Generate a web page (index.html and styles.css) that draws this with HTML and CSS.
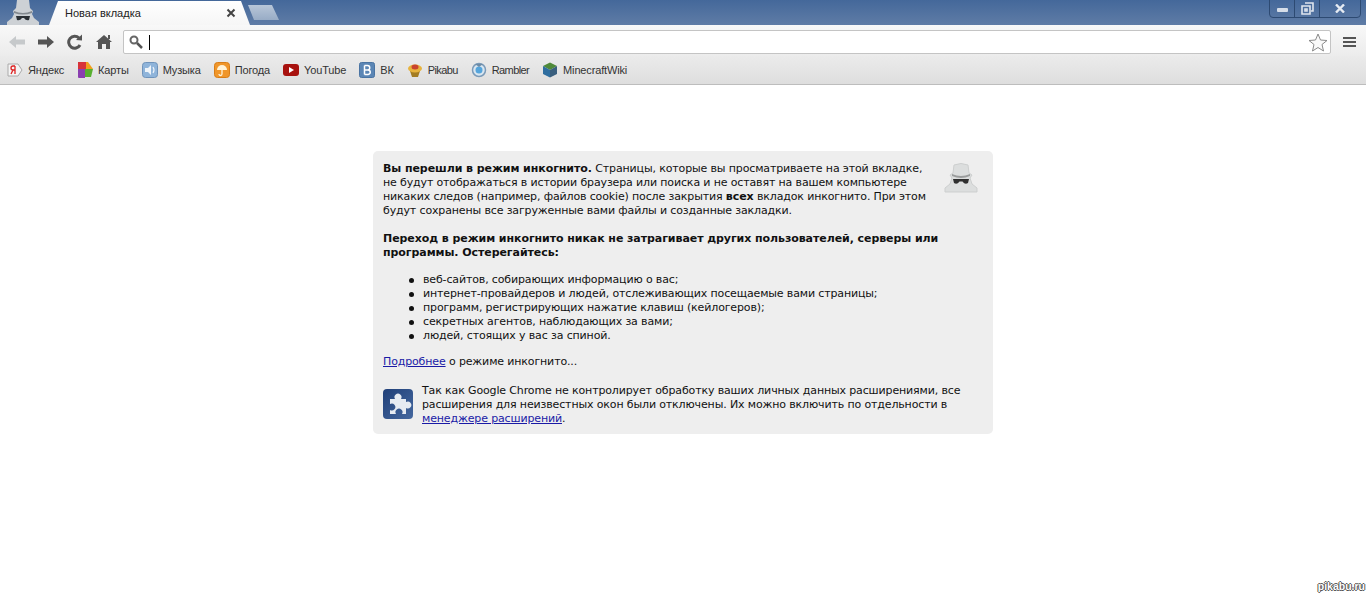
FILE: index.html
```html
<!DOCTYPE html>
<html lang="ru">
<head>
  <meta charset="UTF-8" />
  <title>Новая вкладка</title>
  <link rel="stylesheet" href="styles.css">
</head>
<body>
  <div class="browser">
    <div class="titlebar">
      <svg class="spy" width="36" height="25" viewBox="0 0 36 25">
        <path d="M12 0 L24 0 L25 8 L28 11 L27 14 L29 18 L34 22 L34 25 L2 25 L2 22 L7 18 L9 14 L8 11 L11 8 Z" fill="#cdd1d5"/>
        <path d="M9 11 Q18 15 27 11 L27 13 Q18 16 9 13 Z" fill="#83898f"/>
        <path d="M11 16 L25 16 L24 20 Q21 21 19 18 L17 18 Q15 21 12 20 Z" fill="#2b3035"/>
      </svg>
      <div class="tab">
        <span class="tab-title">Новая вкладка</span>
        <svg class="tab-close" width="10" height="10" viewBox="0 0 10 10"><path d="M1.500 1.500 L8.500 8.500 M8.500 1.500 L1.500 8.500" stroke="#444" stroke-width="2"/></svg>
      </div>
      <div class="newtab"></div>
      <div class="winctl">
        <div class="winbtn minbtn"><span class="min-glyph"></span></div>
        <div class="winbtn maxbtn">
          <svg width="13" height="13" viewBox="0 0 13 13"><path d="M4 1h8v8h-2M1 4h8v8H1zM4 7h2v2H4z" fill="none" stroke="#dfe5ee" stroke-width="1.600"/></svg>
        </div>
        <div class="winbtn closebtn">
          <svg width="10" height="9" viewBox="0 0 10 9"><path d="M1 0.500 L9 8.500 M9 0.500 L1 8.500" stroke="#e6ebf2" stroke-width="2.400"/></svg>
        </div>
      </div>
    </div>

    <div class="toolbar">
      <svg class="navicon" width="18" height="16" viewBox="0 0 18 16"><path d="M1 8 L8 2 V5.500 H17 V10.500 H8 V14 Z" fill="#c6c9cb"/></svg>
      <svg class="navicon" width="18" height="16" viewBox="0 0 18 16"><path d="M17 8 L10 2 V5.500 H1 V10.500 H10 V14 Z" fill="#555"/></svg>
      <svg class="navicon" width="18" height="16" viewBox="0 0 18 16"><path d="M14 11 A6 6 0 1 1 13 4" fill="none" stroke="#555" stroke-width="3"/><path d="M10 6 L16 6.500 L16 0.500 Z" fill="#555"/></svg>
      <svg class="navicon" width="18" height="16" viewBox="0 0 18 16"><path d="M9 1 L17 8 L15 8 V15 H11 V10 H7 V15 H3 V8 H1 Z" fill="#555"/><rect x="13" y="1" width="2" height="4" fill="#555"/></svg>
      <div class="omnibox">
        <svg width="14" height="14" viewBox="0 0 14 14"><circle cx="5" cy="5" r="3.500" fill="none" stroke="#666" stroke-width="2"/><path d="M8 8 L13 13" stroke="#555" stroke-width="2.500"/></svg>
        <span class="caret"></span>
        <svg class="star" width="20" height="19" viewBox="0 0 20 19"><path d="M10 1 L12.500 7 L19 7.500 L14 11.500 L15.500 18 L10 14.500 L4.500 18 L6 11.500 L1 7.500 L7.500 7 Z" fill="#fafafa" stroke="#8a8a8a"/></svg>
      </div>
      <div class="menu"><span></span><span></span><span></span></div>
    </div>

    <div class="bookmarks">
      <span class="bm">
        <svg width="16" height="16" viewBox="0 0 16 16"><path d="M1 2h10l4 6-4 6H1z" fill="#f4f4f4" stroke="#aaa"/><path d="M8 4v8M8 4H6a2 2 0 0 0 0 4h2M6 8l-2 4" fill="none" stroke="#d22" stroke-width="1.300"/></svg>
        Яндекс
      </span>
      <span class="bm">
        <svg width="16" height="16" viewBox="0 0 16 16"><path d="M1 0h8v7H1z" fill="#d8333a"/><path d="M1 7h7v9H2q-1 0-1-1z" fill="#8a3fb0"/><path d="M9 0h2l5 7H9z" fill="#f2a01e"/><path d="M8 7h8l-2 8H8z" fill="#58b030"/></svg>
        Карты
      </span>
      <span class="bm">
        <svg width="16" height="16" viewBox="0 0 16 16"><rect x="0.500" y="0.500" width="15" height="15" rx="3" fill="#8fb4da" stroke="#6f93bb"/><path d="M3 6h3l3-3v10l-3-3H3z" fill="#eef4fa"/><path d="M11 5q2 3 0 6" fill="none" stroke="#eef4fa" stroke-width="1.200"/></svg>
        Музыка
      </span>
      <span class="bm">
        <svg width="16" height="16" viewBox="0 0 16 16"><rect x="0.500" y="0.500" width="15" height="15" rx="3" fill="#f0962a" stroke="#d87d16"/><path d="M3 8a5 5 0 0 1 10 0z" fill="#fff3d8"/><path d="M8 8v4a1.500 1.500 0 0 1-3 0" fill="none" stroke="#fff3d8" stroke-width="1.300"/></svg>
        Погода
      </span>
      <span class="bm">
        <svg width="16" height="16" viewBox="0 0 16 16"><rect x="0" y="2" width="16" height="12" rx="3" fill="#a8120f"/><path d="M6 5l5 3-5 3z" fill="#fff"/></svg>
        YouTube
      </span>
      <span class="bm">
        <svg width="16" height="16" viewBox="0 0 16 16"><rect x="0.500" y="0.500" width="15" height="15" rx="2" fill="#5b86b5" stroke="#4a74a3"/><path d="M5.500 3.500v9M5.500 3.500h3a2 2 0 0 1 0 4.500h-3M5.500 8h3.500a2.200 2.200 0 0 1 0 4.500h-3.500" fill="none" stroke="#fff" stroke-width="1.500"/></svg>
        ВК
      </span>
      <span class="bm bm-narrow">
        <svg width="16" height="16" viewBox="0 0 16 16"><path d="M3 9h10l-2 6H5z" fill="#a37c22"/><ellipse cx="8" cy="6.500" rx="7" ry="4" fill="#e7b33d"/><ellipse cx="8" cy="5" rx="3.500" ry="2.500" fill="#c9432e"/></svg>
        Pikabu
      </span>
      <span class="bm bm-narrow">
        <svg width="16" height="16" viewBox="0 0 16 16"><circle cx="8" cy="8" r="6.500" fill="#d9e6f0" stroke="#7a9ab8" stroke-width="1.500"/><circle cx="8" cy="8" r="3.500" fill="#55a5dc"/><path d="M4 2h8l-4 3z" fill="#6d8ba6"/></svg>
        Rambler
      </span>
      <span class="bm">
        <svg width="16" height="16" viewBox="0 0 16 16"><path d="M8 0.500 15 4 8 8 1 4z" fill="#4f8a3a"/><path d="M1 4l7 4v7.500L1 12z" fill="#2f6ea0"/><path d="M15 4 8 8v7.500L15 12z" fill="#3a5f7e"/></svg>
        MinecraftWiki
      </span>
    </div>

    <div class="content">
      <div class="incognito-card">
        <svg class="card-spy" width="34" height="32" viewBox="0 0 34 32">
          <path d="M10 3 Q17 0 24 3 L25 11 L28 13 L26 16 L28 22 L33 26 L33 30 L1 30 L1 26 L6 22 L8 16 L6 13 L9 11 Z" fill="#dcdede" stroke="#cdcfcf"/>
          <path d="M8 12 Q17 16 26 12 L26 14 Q17 18 8 14 Z" fill="#9a9c9c"/>
          <path d="M9 17 L25 17 L24 21 Q21 23 18.500 19.500 L15.500 19.500 Q13 23 10 21 Z" fill="#2f2f2f"/>
        </svg>
        <p><b>Вы перешли в режим инкогнито.</b> Страницы, которые вы просматриваете на этой вкладке,<br>
        не будут отображаться в истории браузера или поиска и не оставят на вашем компьютере<br>
        никаких следов (например, файлов cookie) после закрытия <b>всех</b> вкладок инкогнито. При этом<br>
        будут сохранены все загруженные вами файлы и созданные закладки.</p>
        <p><b>Переход в режим инкогнито никак не затрагивает других пользователей, серверы или<br>
        программы. Остерегайтесь:</b></p>
        <ul>
          <li>веб-сайтов, собирающих информацию о вас;</li>
          <li>интернет-провайдеров и людей, отслеживающих посещаемые вами страницы;</li>
          <li>программ, регистрирующих нажатие клавиш (кейлогеров);</li>
          <li>секретных агентов, наблюдающих за вами;</li>
          <li>людей, стоящих у вас за спиной.</li>
        </ul>
        <p><a href="#">Подробнее</a> о режиме инкогнито...</p>
        <div class="ext-note">
          <svg width="30" height="30" viewBox="0 0 30 30">
            <defs>
              <linearGradient id="puzzlebg" x1="0" y1="0" x2="1" y2="1">
                <stop offset="0" stop-color="#1f3f78"/>
                <stop offset="1" stop-color="#45689f"/>
              </linearGradient>
            </defs>
            <rect width="30" height="30" rx="4" fill="url(#puzzlebg)"/>
            <path d="M7 10 H12 a3.500 3.500 0 1 1 6 0 H23 V13 a3.500 3.500 0 1 1 0 6 V25 H19 a3.500 3.500 0 1 0 -6 0 H7 V21 a3.500 3.500 0 1 0 0 -6 Z" fill="#e6ebf2"/>
          </svg>
          <p>Так как Google Chrome не контролирует обработку ваших личных данных расширениями, все<br>
          расширения для неизвестных окон были отключены. Их можно включить по отдельности в<br>
          <a href="#">менеджере расширений</a>.</p>
        </div>
      </div>
    </div>
  </div>
  <div class="watermark">pikabu.ru</div>
</body>
</html>
```

FILE: styles.css
```css
html, body {
  margin: 0;
  height: 597px;
  overflow: hidden;
  background: #fff;
}

body {
  font-family: 'DejaVu Sans', sans-serif;
  font-size: 11px;
  color: #111;
  position: relative;
}

.browser {
  width: 1366px;
}

.titlebar {
  height: 25px;
  background: linear-gradient(#44689a, #5f7ca6);
  display: flex;
  align-items: flex-end;
  position: relative;
  overflow: hidden;
}

.spy {
  margin-left: 5px;
  flex: none;
}

.tab {
  width: 201px;
  height: 24px;
  margin-left: 8px;
  box-sizing: border-box;
  padding: 0 14px 0 16px;
  background: linear-gradient(#fff, #f6f6f6);
  clip-path: polygon(0 100%, 9px 0, 192px 0, 100% 100%);
  display: flex;
  align-items: center;
  justify-content: space-between;
  font-family: 'Liberation Sans', sans-serif;
  color: #222;
}

.newtab {
  width: 31px;
  height: 15px;
  margin: 0 0 5px -2px;
  background: linear-gradient(#b8c6d8, #98acc6);
  clip-path: polygon(0 0, 24px 0, 100% 100%, 6px 100%);
}

.winctl {
  position: absolute;
  top: -1px;
  right: 5px;
  height: 17px;
  display: flex;
  border: 1px solid #2d4a72;
  border-radius: 0 0 4px 4px;
}

.winbtn {
  display: flex;
  align-items: center;
  justify-content: center;
  border-left: 1px solid #2d4a72;
}

.minbtn {
  width: 24px;
  border-left: 0;
}

.min-glyph {
  width: 11px;
  height: 4px;
  margin-top: 3px;
  border-radius: 1px;
  background: #d6dee9;
}

.maxbtn {
  width: 24px;
}

.closebtn {
  width: 40px;
}

.toolbar {
  height: 31px;
  background: linear-gradient(#f8f8f8, #ececec);
  display: flex;
  align-items: center;
  box-sizing: border-box;
  padding: 3px 4px 0 8px;
}

.navicon {
  margin-right: 11px;
  flex: none;
}

.omnibox {
  flex: 1;
  height: 24px;
  margin-left: -1px;
  box-sizing: border-box;
  background: #fff;
  border: 1px solid #c4c4c4;
  border-radius: 2px;
  display: flex;
  align-items: center;
  padding: 0 2px 0 5px;
}

.caret {
  width: 1px;
  height: 15px;
  margin-left: 6px;
  background: #000;
}

.star {
  margin-left: auto;
}

.menu {
  width: 13px;
  margin-left: 12px;
  margin-right: 6px;
  display: flex;
  flex-direction: column;
  gap: 2px;
}

.menu span {
  height: 2px;
  background: #555;
}

.bookmarks {
  height: 29px;
  box-sizing: border-box;
  background: linear-gradient(#ebebeb, #dedede);
  border-bottom: 1px solid #bdbdbd;
  display: flex;
  align-items: center;
  gap: 13px;
  padding-left: 7px;
  font-family: 'Liberation Sans', sans-serif;
  letter-spacing: -0.15px;
  color: #333;
}

.bm {
  display: flex;
  align-items: center;
  gap: 5px;
}

.bm-narrow {
  letter-spacing: -0.6px;
}

.content {
  padding: 66px 0 0 373px;
}

.incognito-card {
  width: 620px;
  box-sizing: border-box;
  padding: 11px 10px 8px;
  background: #eeeeee;
  border-radius: 5px;
  line-height: 14px;
  letter-spacing: -0.14px;
  position: relative;
}

.incognito-card b {
  letter-spacing: -0.07px;
}

.incognito-card p {
  margin: 0 0 14px;
}

.incognito-card a {
  color: #1a1aa6;
}

.card-spy {
  position: absolute;
  top: 11px;
  right: 15px;
}

ul {
  margin: -1px 0 12px;
  padding-left: 40px;
  list-style: none;
}

li {
  position: relative;
}

li::before {
  content: "";
  position: absolute;
  left: -14px;
  top: 5px;
  width: 5px;
  height: 5px;
  border-radius: 50%;
  background: #111;
}

.ext-note {
  display: flex;
  gap: 9px;
  margin-top: 15px;
}

.ext-note svg {
  flex: none;
  margin-top: 5px;
}

.incognito-card .ext-note p {
  margin: 0;
}

.watermark {
  position: absolute;
  right: 6px;
  bottom: 5px;
  color: #fff;
  font-family: 'Liberation Sans', sans-serif;
  font-weight: bold;
  font-size: 10.500px;
  text-shadow: 1px 0 0 #555, -1px 0 0 #555, 0 1px 0 #555, 0 -1px 0 #555;
}
```
